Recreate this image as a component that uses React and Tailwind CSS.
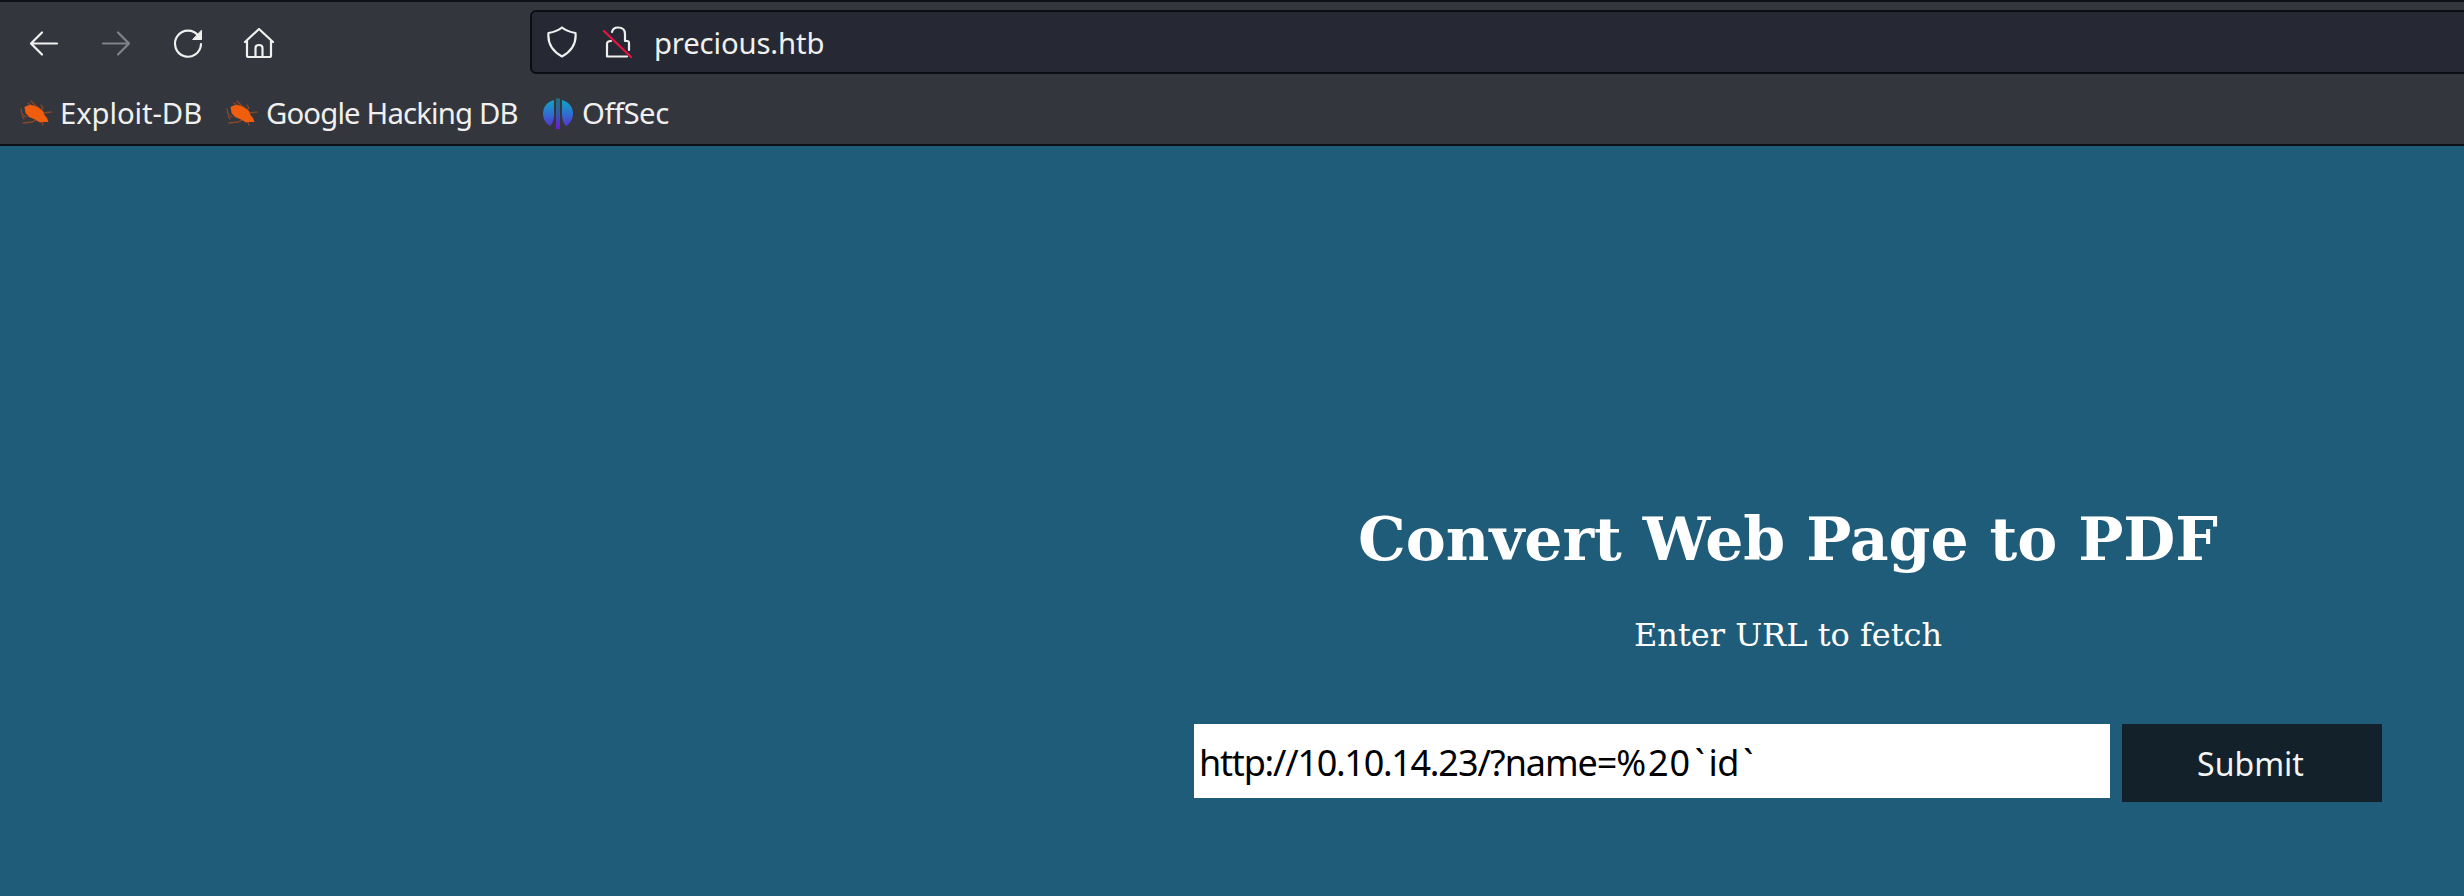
const Icon = ({ children, className = "" }) => (
  <svg width="32" height="32" viewBox="0 0 32 32" fill="none" stroke="currentColor" strokeWidth="2.2" strokeLinecap="round" strokeLinejoin="round" className={"shrink-0 " + className}>
    {children}
  </svg>
);

const Bug = () => (
  <svg width="32" height="28" viewBox="0 0 32 28" className="mt-1 shrink-0">
    <g stroke="#8a4726" strokeWidth="1.3" fill="none" strokeLinecap="round">
      <path d="M8 3L13 7M11 1L15 5L19 8M1 9L2 14L6 17M3 23L12 22L16 20M24 13L31 12M22 22L23 25M2 16L4 19M20 10L23 8L21 5" />
    </g>
    <path d="M4.500 7Q9 4 14 5.500L19 8L23 11L24.500 15L27 18L28.500 22L23 22L20 22.500L15 19.500L9 17L5.500 13Z" fill="#ef5d0d" />
  </svg>
);

const OffSecLogo = () => (
  <svg width="32" height="32" viewBox="0 0 32 32" className="mt-1 shrink-0">
    <defs>
      <linearGradient id="os" x1="0" y1="0" x2="0" y2="32" gradientUnits="userSpaceOnUse">
        <stop offset="0.05" stopColor="#0fa6c4" />
        <stop offset="0.5" stopColor="#2f6fd0" />
        <stop offset="0.9" stopColor="#5b2fd0" />
      </linearGradient>
      <linearGradient id="bar" x1="0" y1="0" x2="0" y2="32" gradientUnits="userSpaceOnUse">
        <stop offset="0" stopColor="#22707f" />
        <stop offset="0.5" stopColor="#2f5aa8" />
        <stop offset="0.9" stopColor="#6a1fd8" />
      </linearGradient>
    </defs>
    <path d="M12 2C5 4 1 9 1 15.500C1 21 4 26 8 28C10 26 12 22 12 17Z" fill="url(#os)" />
    <path d="M20 2C27 4 31 9 31 15.500C31 21 28 26 24 28C22 26 20 22 20 17Z" fill="url(#os)" />
    <path d="M14 0.500H18V31H14Z" fill="url(#bar)" />
  </svg>
);

export default function App() {
  return (
    <div className="flex h-[896px] w-[2464px] flex-col overflow-hidden bg-[#1e5c7a] font-['Noto_Sans',sans-serif]">
      <header className="flex h-[146px] shrink-0 flex-col border-y-2 border-[#0f1016] bg-[#34363e] text-[#f0f0ee]">
        <nav className="flex h-20 items-center pl-7">
          <Icon className="mt-1">
            <path d="M29 15.500H3M14 4.500L3 15.500L14 26.500" />
          </Icon>
          <Icon className="mt-1 ml-10 text-[#818287]">
            <path d="M3 15.500H29M18 4.500L29 15.500L18 26.500" />
          </Icon>
          <Icon className="mt-1 ml-10">
            <path d="M26.500 8A13 13 0 1 0 29 16" />
            <path d="M29.500 2.500V11.500H21Z" fill="currentColor" strokeWidth="1" />
          </Icon>
          <Icon className="mt-1 ml-[39px]">
            <path d="M2 14L16 1L30 14M4 13V27.500Q4 29 5.500 29H26.500Q28 29 28 27.500V13M12.500 29V20Q12.500 17 16 17Q19.500 17 19.500 20V29" />
          </Icon>
          <div className="ml-[255px] flex h-16 w-[1960px] shrink-0 items-center rounded-l-md border-2 border-[#0c0d12] bg-[#262933] pl-[14px]">
            <Icon>
              <path d="M16 1.500Q21 5.500 29.500 7Q31 22 16 30.500Q1 22 2.500 7Q11 5.500 16 1.500Z" />
            </Icon>
            <Icon className="ml-6">
              <path d="M10 6Q11 1.500 16 1.500Q23 1.500 23 8V15H25Q27 15 27 17V24M9 15Q5 15 5 18V30.500H25" />
              <path d="M2 5L29 31" stroke="#e6143f" />
            </Icon>
            <span className="mt-[3px] ml-[20px] text-[29.3px] leading-none tracking-[-0.15px] whitespace-nowrap">precious.htb</span>
          </div>
        </nav>
        <div className="flex h-[60px] items-center pl-5 text-[29.3px] leading-none whitespace-nowrap">
          <Bug />
          <span className="mt-[3px] ml-[8px] w-[166px] tracking-[-0.1px]">Exploit-DB</span>
          <Bug />
          <span className="mt-[3px] ml-[8px] w-[276px] tracking-[-0.85px]">Google Hacking DB</span>
          <OffSecLogo />
          <span className="mt-[3px] ml-[8px] tracking-[-0.5px]">OffSec</span>
        </div>
      </header>
      <main className="ml-[1194px] flex w-[1188px] flex-col items-center text-white">
        <h1 className="mt-[357px] font-['DejaVu_Serif',serif] text-[60px] leading-[72px] font-bold whitespace-nowrap">Convert Web Page to PDF</h1>
        <p className="mt-[40px] font-['DejaVu_Serif',serif] text-[32px] leading-[40px] whitespace-nowrap">Enter URL to fetch</p>
        <form className="mt-[69px] flex w-full items-start justify-between">
          <div role="textbox" className="h-[74px] w-[916px] bg-white pt-0.5 pl-[5px] text-[36px] leading-[74px] whitespace-nowrap text-black">
            <span className="tracking-[-1.2px]">http://</span>
            <span className="tracking-[-1.3px]">10.10.14.</span>
            <span className="tracking-[-0.9px]">23/</span>
            <span className="tracking-[-1.1px]">?name=</span>
            <span className="tracking-[2px]">%</span>
            <span className="tracking-[0.8px]">20</span>
            <span className="ml-1 tracking-[3.5px]">`</span>
            <span className="tracking-[-0.4px]">id</span>
            <span className="ml-1">`</span>
          </div>
          <button type="button" className="h-[78px] w-[260px] bg-[#13212a] pt-0.5 pr-[3px] text-[32px] text-[#f3f5f5]">Submit</button>
        </form>
      </main>
    </div>
  );
}
